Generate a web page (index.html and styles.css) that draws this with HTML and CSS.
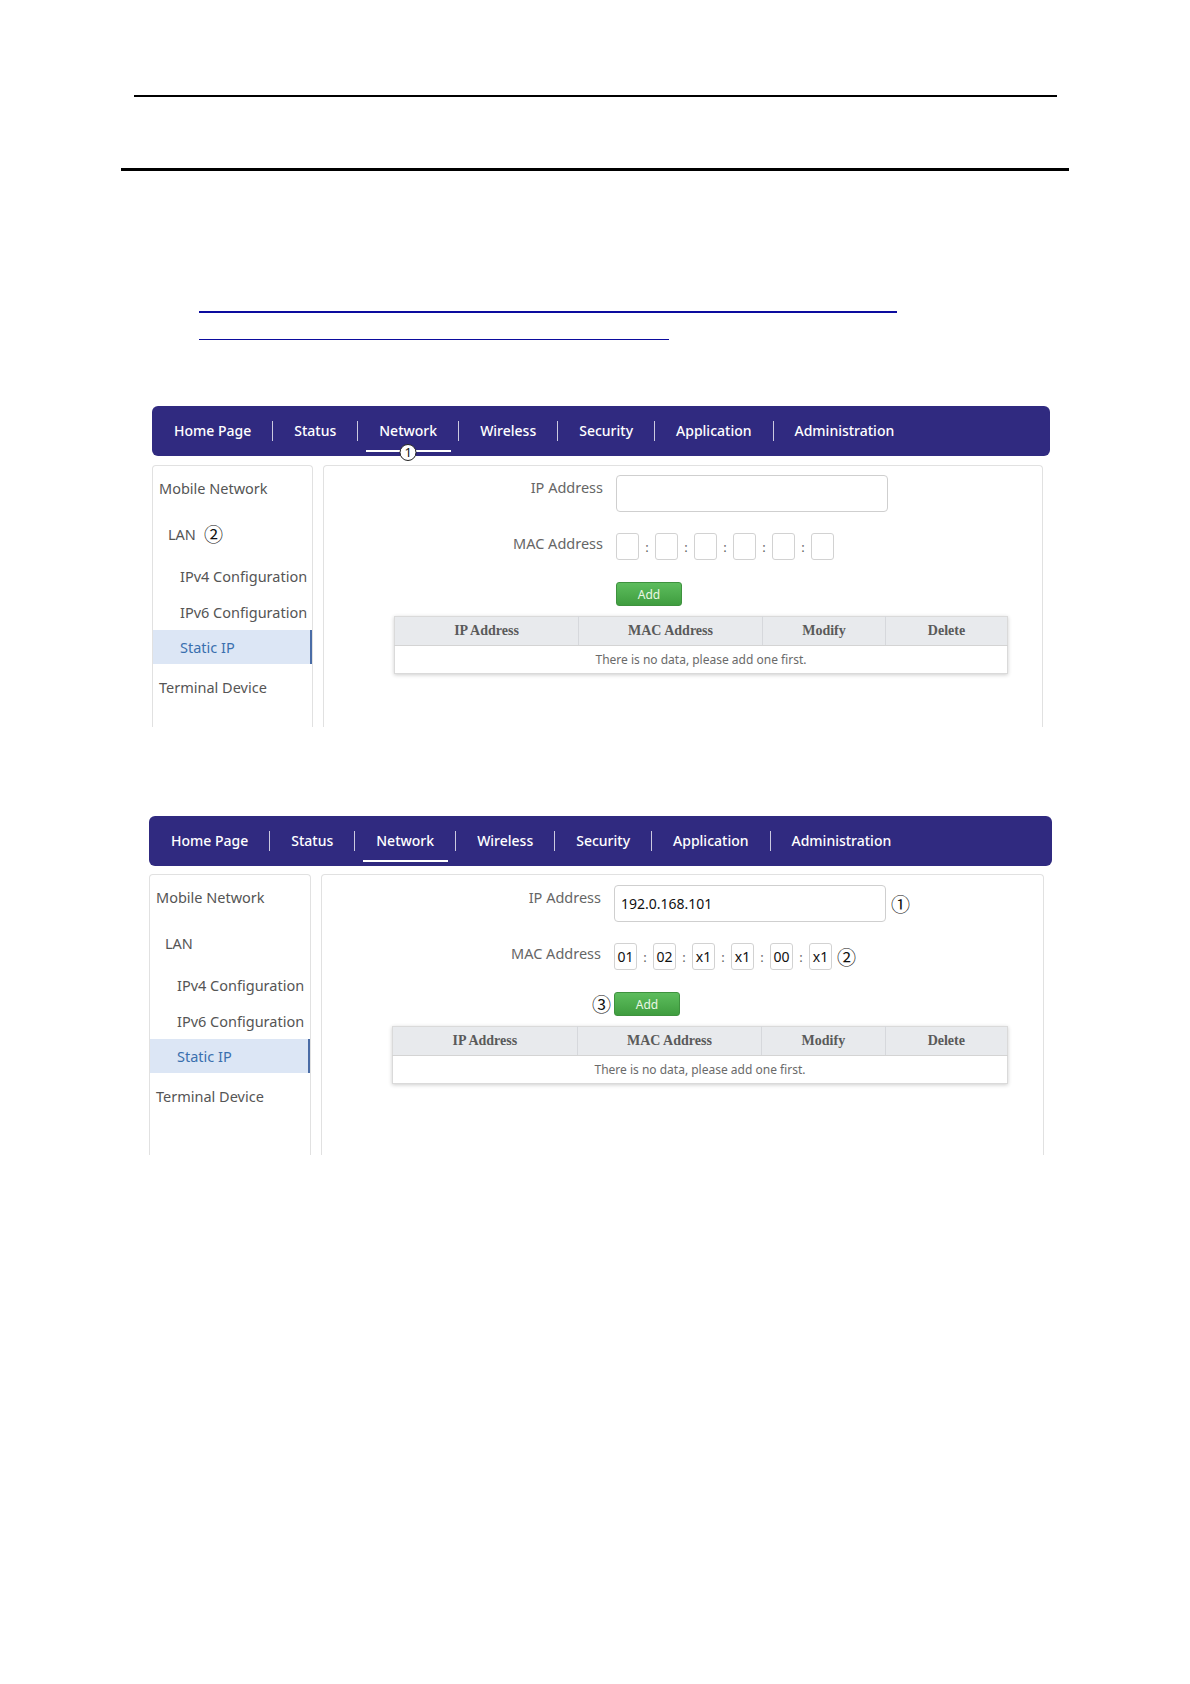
FILE: index.html
```html
<!DOCTYPE html>
<html lang="en">
<head>
<meta charset="utf-8">
<title>Static IP</title>
<link rel="stylesheet" href="styles.css">
</head>
<body>
<div class="page">
  <div class="rule rule-a"></div>
  <div class="rule rule-b"></div>
  <div class="link-line link-a"></div>
  <div class="link-line link-b"></div>

  <figure class="shot shot1">
    <nav class="nav">
      <div class="nav-item">Home Page</div>
      <div class="nav-sep"></div>
      <div class="nav-item">Status</div>
      <div class="nav-sep"></div>
      <div class="nav-item active">Network<span class="nav-mark">1</span></div>
      <div class="nav-sep"></div>
      <div class="nav-item">Wireless</div>
      <div class="nav-sep"></div>
      <div class="nav-item">Security</div>
      <div class="nav-sep"></div>
      <div class="nav-item">Application</div>
      <div class="nav-sep"></div>
      <div class="nav-item">Administration</div>
    </nav>
    <div class="body">
      <aside class="side">
        <div class="side-item lvl0 h-mobile">Mobile Network</div>
        <div class="side-item lvl1 h-lan">LAN <span class="circ circ-lan">②</span></div>
        <div class="side-item lvl2 h-sub">IPv4 Configuration</div>
        <div class="side-item lvl2 h-sub">IPv6 Configuration</div>
        <div class="side-item lvl2 h-static active">Static IP</div>
        <div class="side-item lvl0 h-term">Terminal Device</div>
      </aside>
      <section class="main">
        <div class="form">
          <div class="row row-ip">
            <div class="label label-ip">IP Address</div>
            <div class="field"><div class="input"></div></div>
          </div>
          <div class="row row-mac">
            <div class="label label-mac">MAC Address</div>
            <div class="field">
              <div class="mac"></div><span class="colon">:</span>
              <div class="mac"></div><span class="colon">:</span>
              <div class="mac"></div><span class="colon">:</span>
              <div class="mac"></div><span class="colon">:</span>
              <div class="mac"></div><span class="colon">:</span>
              <div class="mac"></div>
            </div>
          </div>
          <div class="row row-add">
            <div class="label"></div>
            <div class="field"><div class="btn">Add</div></div>
          </div>
        </div>
        <table class="grid">
          <thead>
            <tr><th class="c1">IP Address</th><th class="c2">MAC Address</th><th class="c3">Modify</th><th class="c4">Delete</th></tr>
          </thead>
          <tbody>
            <tr><td colspan="4">There is no data, please add one first.</td></tr>
          </tbody>
        </table>
      </section>
    </div>
  </figure>

  <figure class="shot shot2">
    <nav class="nav">
      <div class="nav-item">Home Page</div>
      <div class="nav-sep"></div>
      <div class="nav-item">Status</div>
      <div class="nav-sep"></div>
      <div class="nav-item active">Network</div>
      <div class="nav-sep"></div>
      <div class="nav-item">Wireless</div>
      <div class="nav-sep"></div>
      <div class="nav-item">Security</div>
      <div class="nav-sep"></div>
      <div class="nav-item">Application</div>
      <div class="nav-sep"></div>
      <div class="nav-item">Administration</div>
    </nav>
    <div class="body">
      <aside class="side">
        <div class="side-item lvl0 h-mobile">Mobile Network</div>
        <div class="side-item lvl1 h-lan">LAN</div>
        <div class="side-item lvl2 h-sub">IPv4 Configuration</div>
        <div class="side-item lvl2 h-sub">IPv6 Configuration</div>
        <div class="side-item lvl2 h-static active">Static IP</div>
        <div class="side-item lvl0 h-term">Terminal Device</div>
      </aside>
      <section class="main">
        <div class="form">
          <div class="row row-ip">
            <div class="label label-ip">IP Address</div>
            <div class="field"><div class="input">192.0.168.101</div><span class="circ circ-after">①</span></div>
          </div>
          <div class="row row-mac">
            <div class="label label-mac">MAC Address</div>
            <div class="field">
              <div class="mac">01</div><span class="colon">:</span>
              <div class="mac">02</div><span class="colon">:</span>
              <div class="mac">x1</div><span class="colon">:</span>
              <div class="mac">x1</div><span class="colon">:</span>
              <div class="mac">00</div><span class="colon">:</span>
              <div class="mac">x1</div><span class="circ circ-after">②</span>
            </div>
          </div>
          <div class="row row-add">
            <div class="label"><span class="circ circ-before">③</span></div>
            <div class="field"><div class="btn">Add</div></div>
          </div>
        </div>
        <table class="grid">
          <thead>
            <tr><th class="c1">IP Address</th><th class="c2">MAC Address</th><th class="c3">Modify</th><th class="c4">Delete</th></tr>
          </thead>
          <tbody>
            <tr><td colspan="4">There is no data, please add one first.</td></tr>
          </tbody>
        </table>
      </section>
    </div>
  </figure>
</div>
</body>
</html>
```
FILE: styles.css
```css
* { box-sizing: border-box; }

body {
  margin: 0;
  background: #fff;
  font-family: "Noto Sans", "Open Sans", sans-serif;
  color: #555;
}

.page { padding-top: 95px; }

.rule { background: #000; }
.rule-a { margin-left: 134px; width: 923px; height: 2px; }
.rule-b { margin: 71px 0 0 121px; width: 948px; height: 3px; }

.link-line { background: #0c0c9e; margin-left: 199px; }
.link-a { margin-top: 140px; width: 698px; height: 2px; }
.link-b { margin-top: 26px; width: 470px; height: 1px; }

.shot { margin: 0; }
.shot1 { margin: 66px 0 0 152px; width: 898px; }
.shot2 { margin: 89px 0 0 149px; width: 903px; }

/* top navigation */
.nav {
  height: 50px;
  background: #302a80;
  border-radius: 6px;
  display: flex;
  align-items: center;
  padding-left: 1px;
  color: #fff;
}
.nav-item {
  position: relative;
  height: 100%;
  display: flex;
  align-items: center;
  padding: 0 21px 1px;
  font-size: 14px;
  font-weight: 500;
  white-space: nowrap;
}
.nav-sep {
  width: 1px;
  height: 20px;
  background: rgba(255, 255, 255, 0.75);
}
.nav-item.active::after {
  content: "";
  position: absolute;
  left: 8px;
  right: 7px;
  bottom: 4px;
  height: 2px;
  background: #fff;
}
.nav-mark {
  position: absolute;
  left: 50%;
  bottom: -5px;
  transform: translateX(-50%);
  z-index: 1;
  width: 17px;
  height: 17px;
  border: 1px solid #222;
  border-radius: 50%;
  background: #fff;
  color: #111;
  font-size: 13px;
  font-weight: 400;
  line-height: 15px;
  text-align: center;
}

/* body panels */
.body {
  display: flex;
  gap: 10px;
  margin-top: 9px;
}
.shot1 .body { height: 262px; }
.shot2 .body { height: 281px; margin-top: 8px; }

.side, .main {
  border: 1px solid #e1e1e1;
  border-bottom: none;
  border-radius: 4px 4px 0 0;
  background: #fff;
}
.side { width: 161px; flex: none; }
.shot2 .side { width: 162px; }
.main { flex: 1; margin-right: 7px; }
.shot2 .main { margin-right: 8px; }

.side-item {
  display: flex;
  align-items: center;
  font-size: 14.5px;
  color: #555;
  white-space: nowrap;
}
.lvl0 { padding-left: 6px; }
.lvl1 { padding-left: 15px; }
.lvl2 { padding-left: 27px; }
.h-mobile { height: 44px; }
.h-lan { height: 48px; }
.h-sub { height: 36px; }
.h-static { height: 34px; }
.h-term { height: 46px; }
.side-item.active {
  background: #dce6f5;
  color: #3a6fae;
  box-shadow: inset -2px 0 0 #4a6ca6;
}

.circ {
  font-family: "Noto Sans CJK SC", "Noto Sans CJK JP", sans-serif;
  font-size: 19px;
  line-height: 20px;
  color: #111;
  font-weight: 400;
}
.circ-lan { margin-left: 8px; }
.circ-after { margin-left: 5px; }
.circ-before { margin-right: -10px; }

/* form */
.form { padding-top: 9px; }
.shot2 .form { padding-top: 10px; }
.row { display: flex; }
.row-mac { margin-top: 21px; }
.row-add { margin-top: 22px; }
.label {
  width: 279px;
  margin-right: 13px;
  flex: none;
  text-align: right;
  font-size: 14.5px;
  color: #666;
  white-space: nowrap;
}
.label-ip { line-height: 25px; }
.label-mac { line-height: 20px; }
.row-add .label { display: flex; align-items: center; justify-content: flex-end; }
.field { display: flex; align-items: center; }

.input {
  width: 272px;
  height: 37px;
  border: 1px solid #cfcfcf;
  border-radius: 4px;
  padding-left: 6px;
  display: flex;
  align-items: center;
  font-size: 14px;
  color: #111;
}
.mac {
  width: 23px;
  height: 27px;
  border: 1px solid #d2d2d2;
  border-radius: 3px;
  display: flex;
  align-items: center;
  justify-content: center;
  font-size: 14px;
  color: #111;
}
.colon {
  width: 16px;
  text-align: center;
  font-size: 13px;
  color: #666;
}
.btn {
  width: 66px;
  height: 24px;
  border: 1px solid #3e923e;
  border-radius: 3px;
  background: linear-gradient(#5dbd5d, #3f9d3f);
  color: #eaf7e4;
  font-size: 12px;
  display: flex;
  align-items: center;
  justify-content: center;
}

/* table */
.grid {
  margin: 10px 0 0 70px;
  width: 613px;
  border-collapse: collapse;
  border: 1px solid #dadada;
  box-shadow: 0 1px 4px rgba(0, 0, 0, 0.2);
  table-layout: fixed;
}
.shot2 .grid { width: 616px; }
.grid th {
  height: 29px;
  background: #e8eaed;
  border-left: 1px solid #d6d8dc;
  border-bottom: 1px solid #d4d4d4;
  font-family: "Liberation Serif", serif;
  font-weight: 700;
  font-size: 14px;
  color: #5a5a5a;
  padding: 0;
}
.grid th:first-child { border-left: none; }
.grid .c1 { width: 184px; }
.grid .c2 { width: 184px; }
.grid .c3 { width: 123px; }
.grid .c4 { width: 122px; }
.grid td {
  height: 28px;
  text-align: center;
  font-size: 12px;
  color: #6a6a6a;
  padding: 0;
}
```
